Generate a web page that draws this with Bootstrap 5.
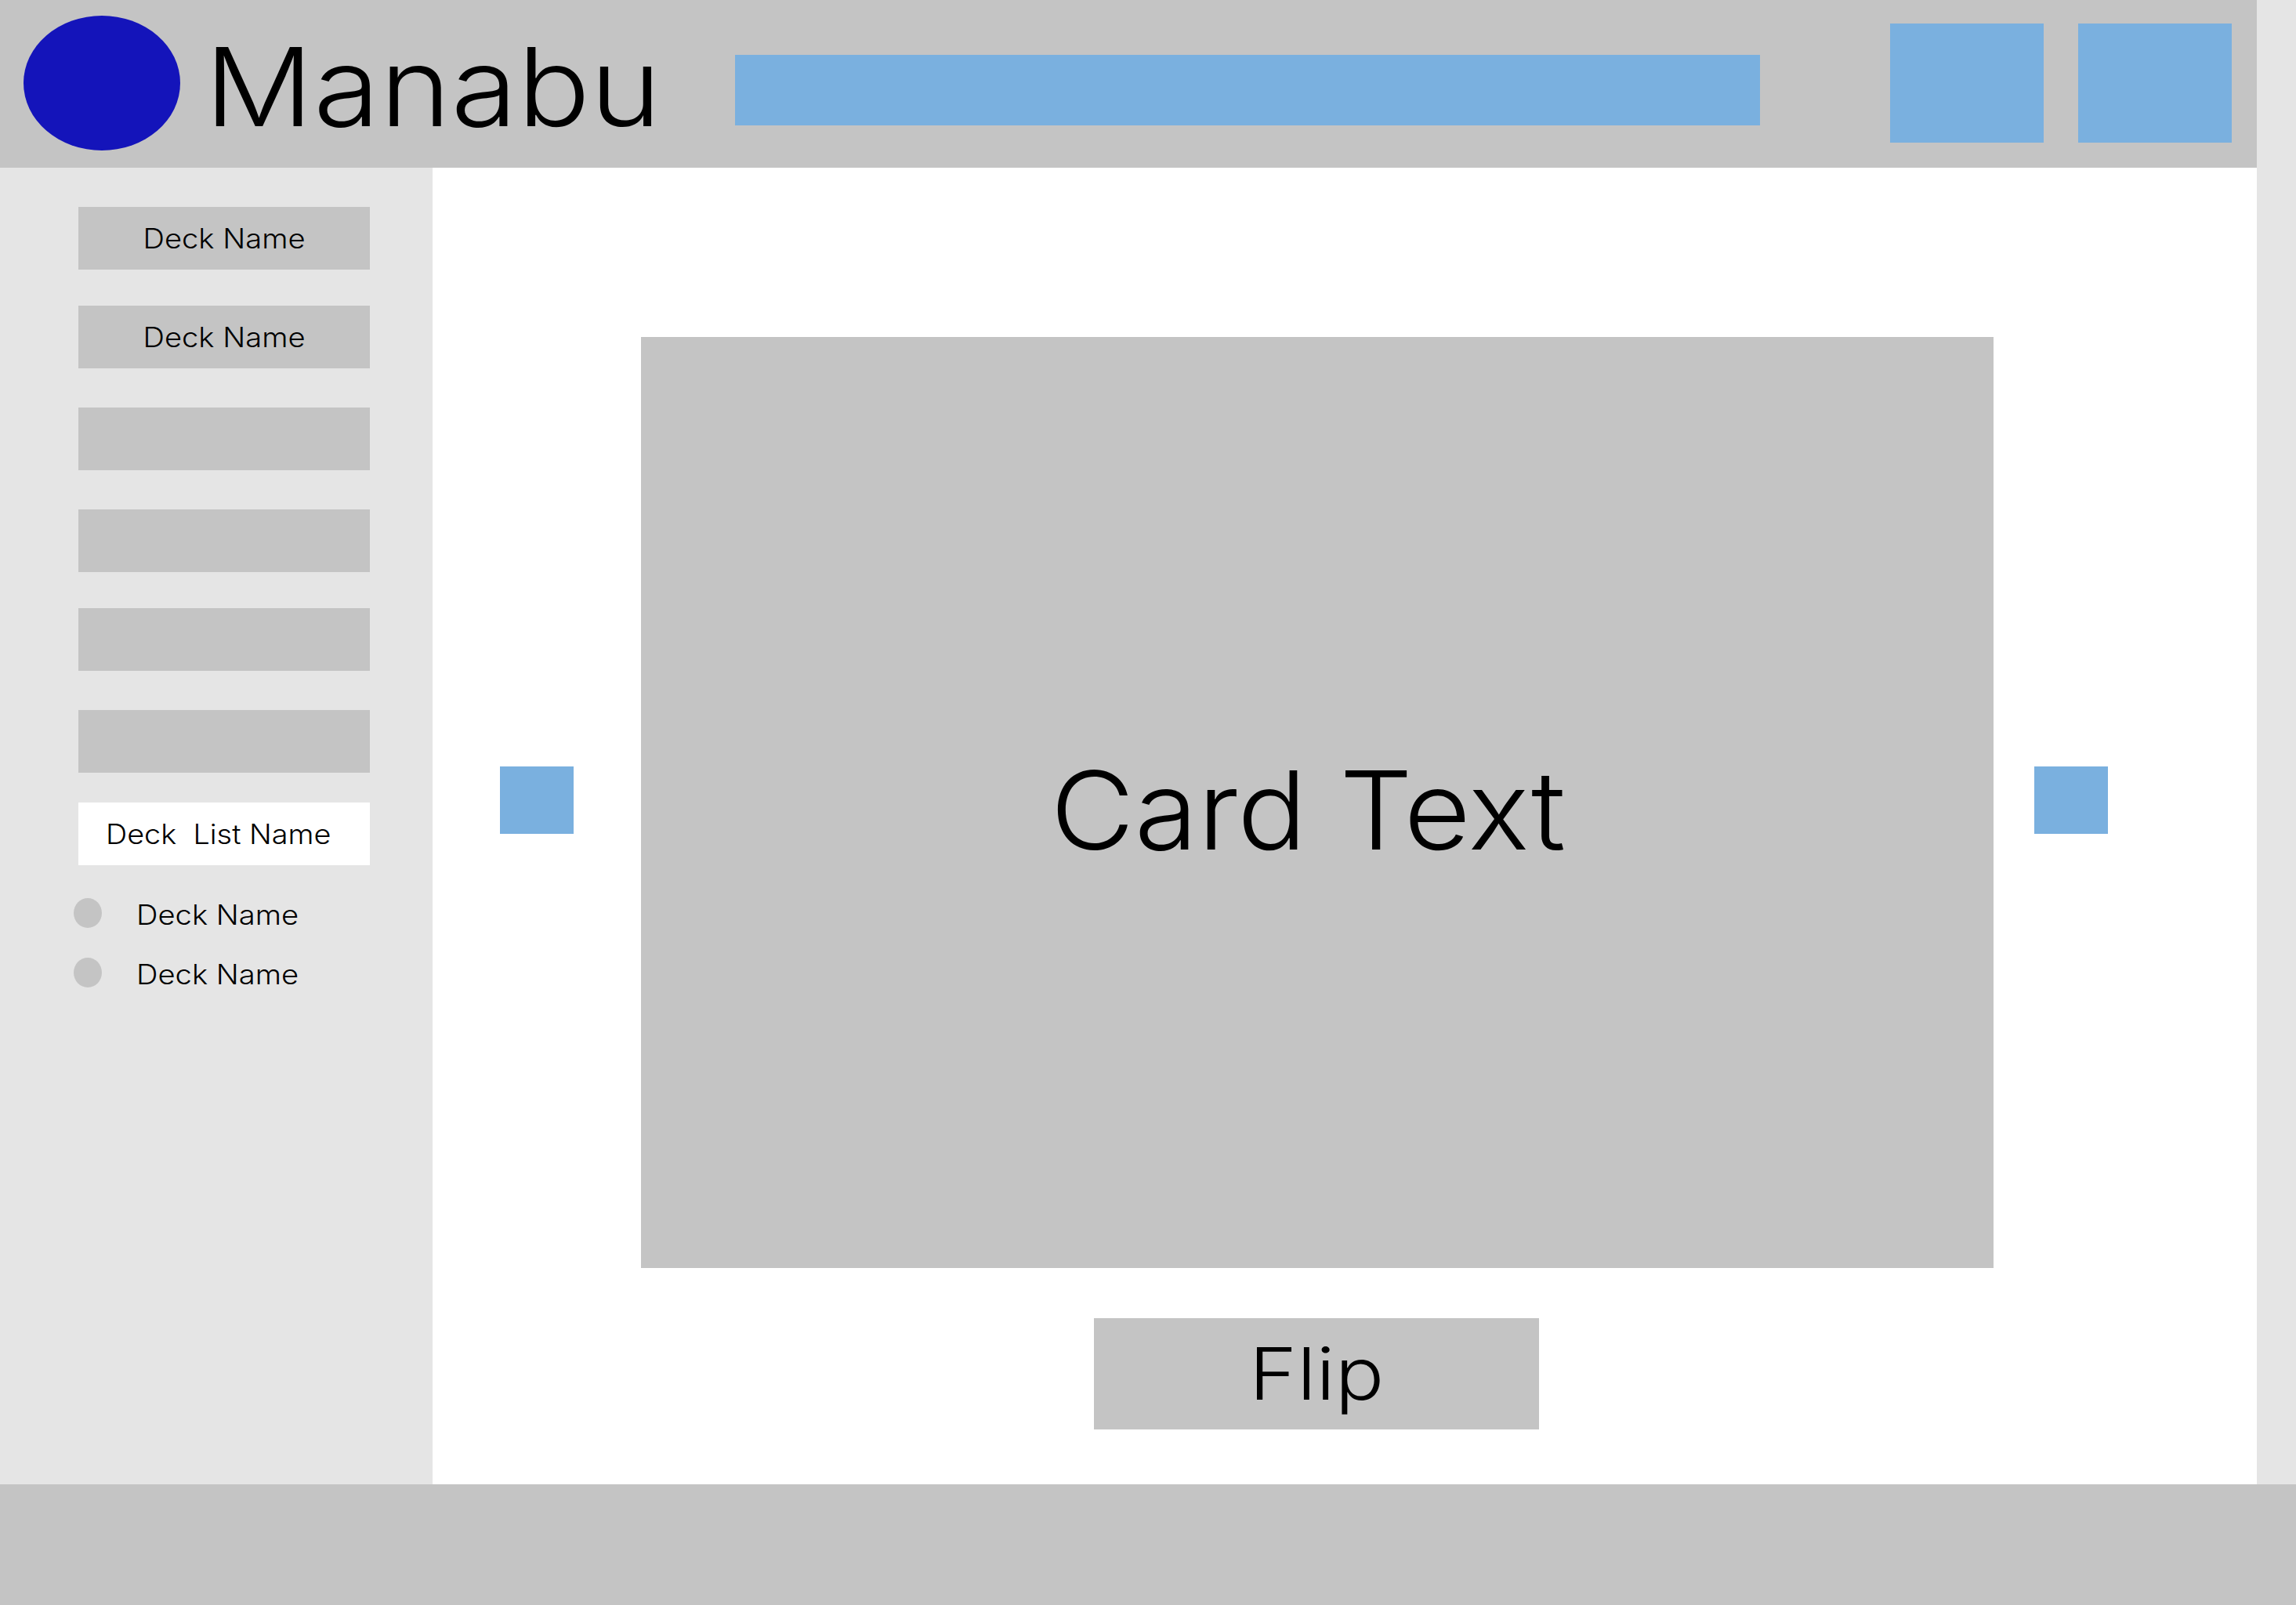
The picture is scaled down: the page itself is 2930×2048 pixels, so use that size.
<!DOCTYPE html>
<html lang="en">
<head>
    <meta charset="UTF-8">
    <meta name="viewport" content="width=device-width, initial-scale=1.0">
    <title>Manabu</title>
    <link rel="stylesheet" href="https://cdn.jsdelivr.net/npm/bootstrap@5.3.0/dist/css/bootstrap.min.css">
    <style>
        body { background: #fff; color: #000; font-family: "Inter", "Liberation Sans", sans-serif; font-weight: 300; }
        .page-wrap { width: 2930px; height: 2048px; overflow: hidden; }
        .page-top { height: 1894px; background: #e5e5e5; }
        .page-left { width: 2880px; }

        /* the picture's font is wider than any installed one */
        .wide-text { display: inline-block; transform: scaleX(1.09); }
        .wide-left { transform-origin: left center; }

        .top-bar { height: 214px; background: #c4c4c4; padding-left: 30px; padding-right: 32px; }
        .logo-oval { width: 200px; height: 172px; background: #1414ba; border-radius: 50%; margin-bottom: 2px; }
        .brand-name { width: 664px; padding-left: 31px; font-size: 139px; line-height: 1; margin-top: 7px; color: #000; text-decoration: none; }
        .brand-name .wide-text { transform: scaleX(1.11); }
        .search-box { width: 1308px; height: 90px; background: #7ab0df; border: 0; border-radius: 0; margin-left: 44px; margin-right: 166px; margin-top: 16px; }
        .top-btn { width: 196px; height: 152px; background: #7ab0df; border: 0; border-radius: 0; margin-bottom: 2px; }

        .side-bar { width: 552px; padding: 50px 80px 0 100px; background: #e5e5e5; }
        .deck-btn { height: 80px; width: 372px; background: #c4c4c4; border: 0; border-radius: 0; padding: 0; color: #000; font-size: 35px; font-weight: 300; line-height: 1; margin-bottom: 46px; }
        .deck-gap-wide { margin-bottom: 50px; }
        .deck-title { height: 80px; width: 372px; background: #fff; padding-left: 35px; font-size: 35px; line-height: 1; margin-top: -8px; margin-bottom: 42px; }
        .deck-title .wide-text { transform: scaleX(1.08); }
        .deck-item { height: 38px; font-size: 35px; line-height: 1; margin-left: -6px; margin-bottom: 38px; }
        .deck-dot { width: 36px; height: 38px; background: #c4c4c4; border-radius: 50%; margin-right: 44px; }
        .deck-label { margin-top: 5px; }

        .main-area { background: #fff; }
        .card-row { padding-top: 216px; padding-left: 86px; }
        .arrow-btn { width: 94px; height: 86px; background: #7ab0df; border: 0; border-radius: 0; margin-bottom: 6px; }
        .study-card { width: 1726px; height: 1188px; background: #c4c4c4; margin-left: 86px; margin-right: 52px; font-size: 139px; line-height: 1; padding-top: 19px; padding-right: 24px; }
        .study-card .wide-text { transform: scaleX(1.06); }
        .flip-btn { width: 568px; height: 142px; background: #c4c4c4; border: 0; border-radius: 0; color: #000; font-size: 92px; font-weight: 300; line-height: 1; margin-top: 64px; margin-left: 844px; padding: 0; }
        .flip-btn .wide-text { transform: scaleX(1.13); }

        .foot-bar { height: 154px; background: #c4c4c4; }
    </style>
</head>
<body>
    <div class="page-wrap d-flex flex-column">
        <div class="page-top d-flex">
            <div class="page-left d-flex flex-column">
                <nav class="top-bar d-flex align-items-center">
                    <div class="logo-oval flex-shrink-0"></div>
                    <a class="brand-name flex-shrink-0" href="#"><span class="wide-text wide-left">Manabu</span></a>
                    <input class="form-control search-box flex-shrink-0" type="text" aria-label="Search">
                    <button class="btn top-btn flex-shrink-0" type="button" aria-label="Button one"></button>
                    <button class="btn top-btn flex-shrink-0 ms-auto" type="button" aria-label="Button two"></button>
                </nav>
                <div class="d-flex flex-grow-1">
                    <aside class="side-bar flex-shrink-0 d-flex flex-column">
                        <button class="btn deck-btn" type="button"><span class="wide-text">Deck Name</span></button>
                        <button class="btn deck-btn deck-gap-wide" type="button"><span class="wide-text">Deck Name</span></button>
                        <button class="btn deck-btn deck-gap-wide" type="button" aria-label="Empty deck"></button>
                        <button class="btn deck-btn" type="button" aria-label="Empty deck"></button>
                        <button class="btn deck-btn deck-gap-wide" type="button" aria-label="Empty deck"></button>
                        <button class="btn deck-btn" type="button" aria-label="Empty deck"></button>
                        <div class="deck-title d-flex align-items-center"><span class="wide-text wide-left">Deck&nbsp; List Name</span></div>
                        <div class="deck-item d-flex align-items-center"><span class="deck-dot flex-shrink-0"></span><span class="deck-label wide-text wide-left">Deck Name</span></div>
                        <div class="deck-item d-flex align-items-center"><span class="deck-dot flex-shrink-0"></span><span class="deck-label wide-text wide-left">Deck Name</span></div>
                    </aside>
                    <main class="main-area flex-grow-1">
                        <div class="card-row d-flex align-items-center">
                            <button class="btn arrow-btn flex-shrink-0" type="button" aria-label="Previous"></button>
                            <div class="study-card flex-shrink-0 d-flex align-items-center justify-content-center"><span class="wide-text">Card Text</span></div>
                            <button class="btn arrow-btn flex-shrink-0" type="button" aria-label="Next"></button>
                        </div>
                        <button class="btn flip-btn d-block" type="button"><span class="wide-text">Flip</span></button>
                    </main>
                </div>
            </div>
        </div>
        <footer class="foot-bar"></footer>
    </div>
    <script src="https://cdn.jsdelivr.net/npm/bootstrap@5.3.0/dist/js/bootstrap.bundle.min.js"></script>
</body>
</html>
